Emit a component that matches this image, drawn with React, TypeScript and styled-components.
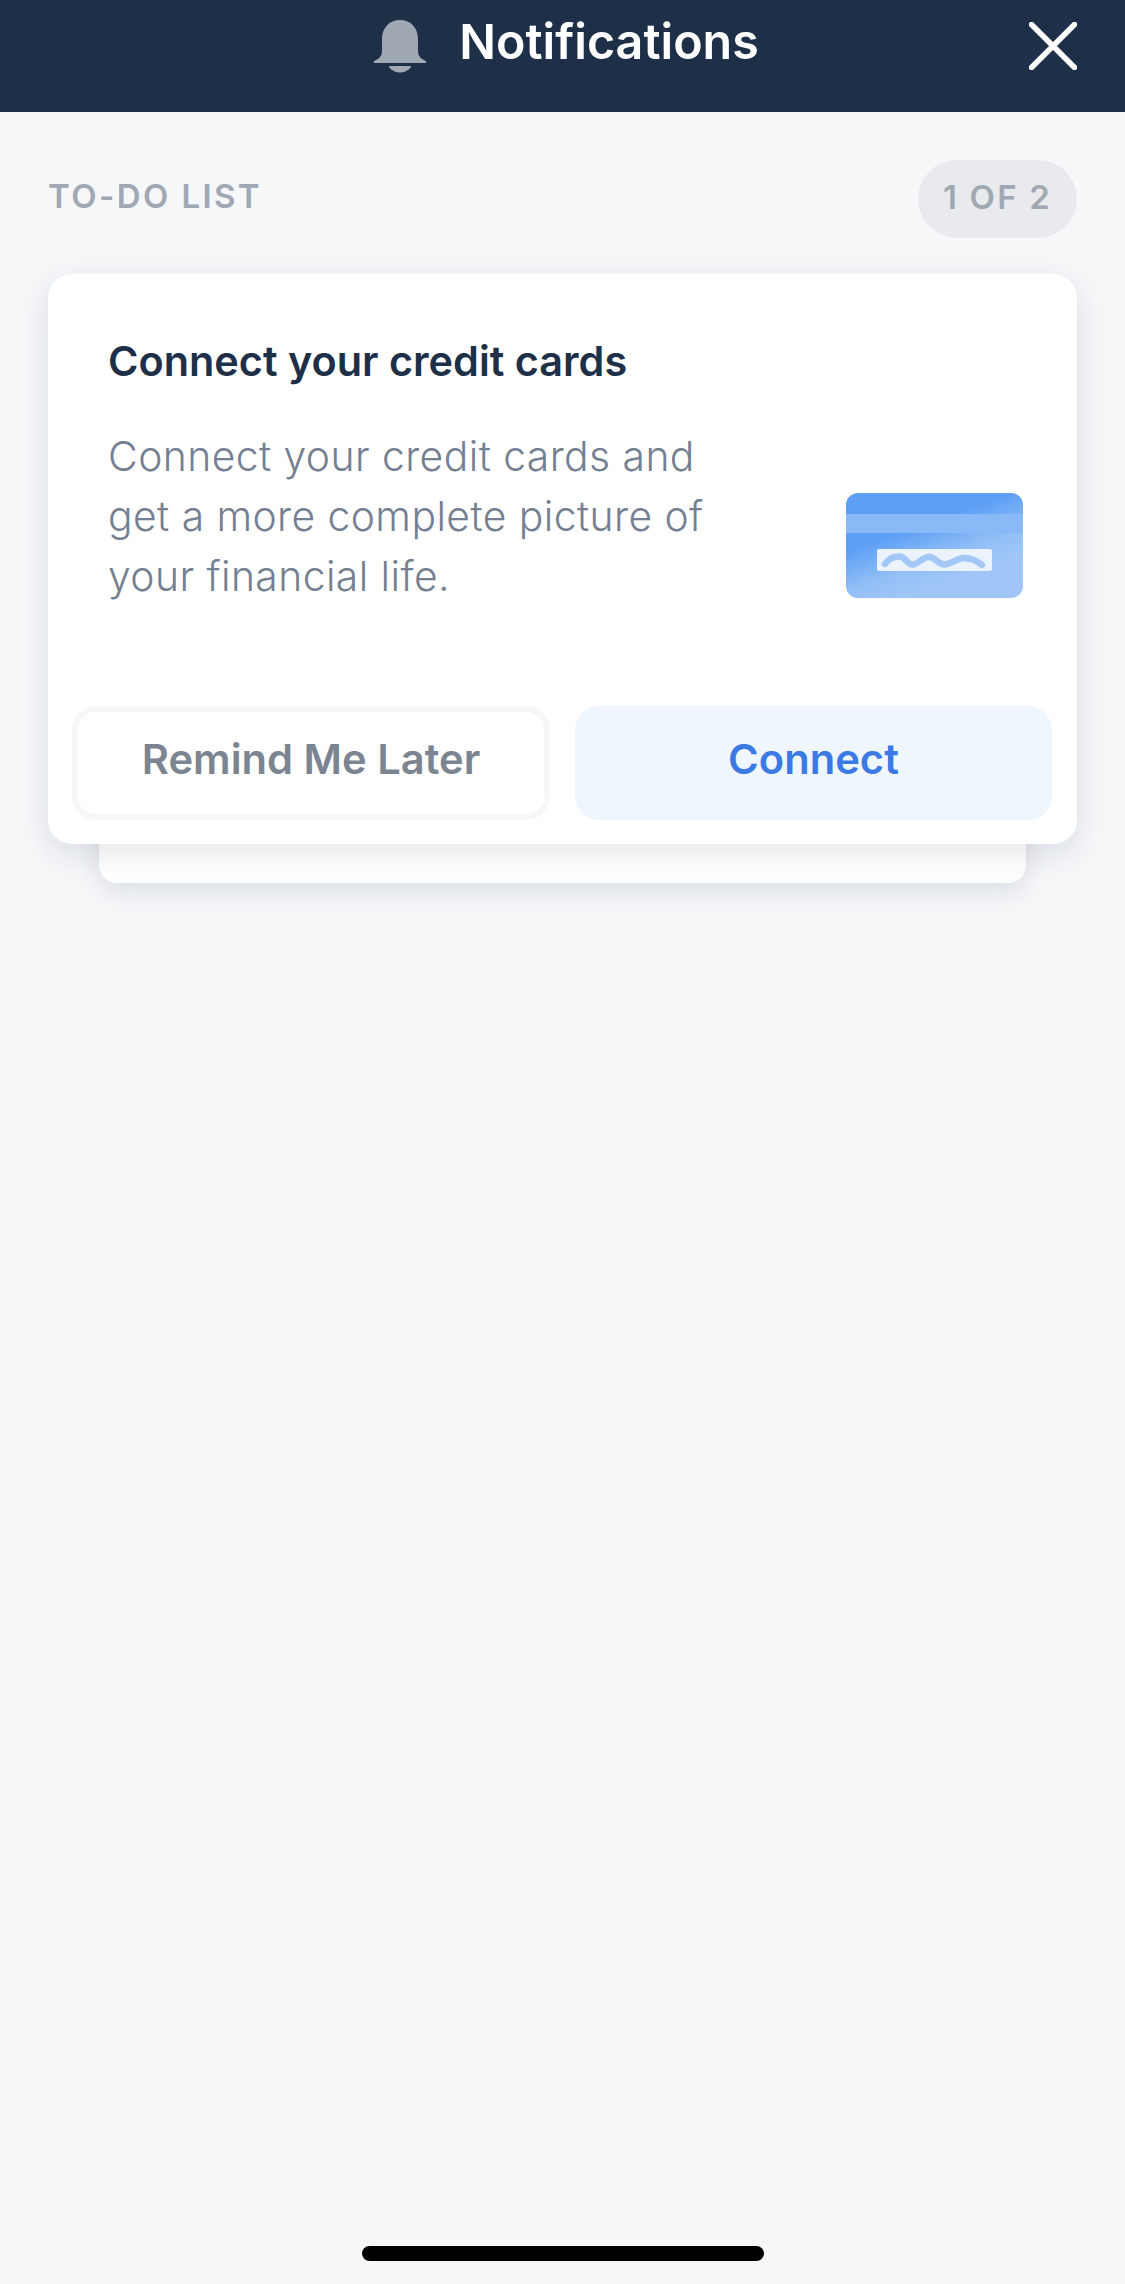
import React from 'react';
import styled, { createGlobalStyle } from 'styled-components';

const GlobalStyle = createGlobalStyle`
    html, body {
        margin: 0;
        padding: 0;
        background: #f5f7f9;
    }
    * {
        box-sizing: border-box;
    }
`;

const Page = styled.div`
    width: 1125px;
    height: 2284px;
    display: flex;
    flex-direction: column;
    background: #f5f7f9;
    font-family: Inter, 'Liberation Sans', sans-serif;
    overflow: hidden;
`;

const Header = styled.header`
    position: relative;
    height: 112px;
    flex-shrink: 0;
    display: flex;
    justify-content: center;
    background: #1e2f48;
    padding: 16px 0 0 7px;
`;

const TitleGroup = styled.div`
    display: flex;
    align-items: flex-start;
    gap: 32px;
    height: 52px;
`;

const HeaderTitle = styled.h1`
    margin: 0;
    font-size: 48.4px;
    line-height: 52px;
    font-weight: 600;
    color: #fff;
`;

const CloseButton = styled.button`
    position: absolute;
    top: 22px;
    right: 48px;
    width: 48px;
    height: 48px;
    padding: 0;
    border: 0;
    background: none;
`;

const Content = styled.main`
    flex: 1;
    padding: 48px 48px 0;
`;

const ListHead = styled.div`
    display: flex;
    justify-content: space-between;
    align-items: center;
    height: 78px;
    margin-bottom: 36px;
`;

const ListLabel = styled.span`
    font-size: 33px;
    font-weight: 600;
    letter-spacing: 2.4px;
    color: #a0a8b4;
    margin-bottom: 6px;
`;

const CountPill = styled.span`
    width: 159px;
    height: 78px;
    display: flex;
    align-items: center;
    justify-content: center;
    border-radius: 39px;
    background: #e8eaed;
    font-size: 33px;
    font-weight: 600;
    letter-spacing: 2.2px;
    color: #a0a8b4;
    padding-bottom: 4px;
`;

const Stack = styled.div`
    position: relative;
`;

const BackCard = styled.div`
    position: absolute;
    left: 51px;
    right: 51px;
    bottom: -39px;
    height: 80px;
    border-radius: 0 0 18px 18px;
    background: #fff;
    box-shadow: 0 8px 24px rgba(30, 47, 72, 0.12);
`;

const Card = styled.section`
    position: relative;
    height: 570px;
    border-radius: 24px;
    background: #fff;
    box-shadow: 0 10px 30px rgba(30, 47, 72, 0.12);
    padding: 0 25px 24px 24px;
    display: flex;
    flex-direction: column;
`;

const CardBody = styled.div`
    flex: 1;
    padding: 62px 29px 0 36px;
`;

const CardTitle = styled.h2`
    margin: 0 0 40px;
    font-size: 41.4px;
    line-height: 50px;
    font-weight: 600;
    color: #1e2f48;
`;

const CardRow = styled.div`
    display: flex;
    justify-content: space-between;
    align-items: flex-end;
`;

const CardText = styled.p`
    margin: 0;
    width: 630px;
    font-size: 40.8px;
    line-height: 60px;
    font-weight: 300;
    letter-spacing: 0.44px;
    color: #748091;
`;

const CardArt = styled.svg`
    flex-shrink: 0;
    margin-bottom: 8px;
`;

const Actions = styled.div`
    display: grid;
    grid-template-columns: 478px 1fr;
    gap: 25px;
`;

const ActionButton = styled.button<{ $primary?: boolean }>`
    height: 114px;
    padding: 0 0 8px;
    border-radius: 24px;
    border: ${props => (props.$primary ? '0' : '6px solid #f5f7f9')};
    background: ${props => (props.$primary ? '#f0f6fe' : '#fff')};
    color: ${props => (props.$primary ? '#3b7ae4' : '#7b8592')};
    font-family: inherit;
    font-size: 41.7px;
    font-weight: 600;
`;

const HomeBar = styled.div`
    width: 402px;
    height: 15px;
    margin: 0 auto 23px;
    border-radius: 8px;
    background: #000;
`;

const BellIcon = () => (
    <svg width="54" height="54" viewBox="0 0 54 54" style={{ marginTop: 3 }}>
        <path
            d="M27 1C16 1 9 9 9 20V32C9 37 6 40 2 41.500C0 42.500 0.500 44 2 44H52C53.500 44 54 42.500 52 41.500C48 40 45 37 45 32V20C45 9 38 1 27 1Z"
            fill="#a0a8b4"
        />
        <path
            d="M17 47C16 47 15.500 48 16.500 49C19 51.500 23 53.500 27 53.500C31 53.500 35 51.500 37.500 49C38.500 48 38 47 37 47Z"
            fill="#a0a8b4"
        />
    </svg>
);

const CloseIcon = () => (
    <svg width="48" height="48" viewBox="0 0 48 48">
        <path d="M2.500 2.500L45.500 45.500M45.500 2.500L2.500 45.500" stroke="#fff" strokeWidth="5.500" strokeLinecap="round" />
    </svg>
);

const CreditCardArt = () => (
    <CardArt width="177" height="105" viewBox="0 0 177 105">
        <defs>
            <linearGradient id="cardFill" x1="0.3" y1="0.38" x2="0.58" y2="0.85">
                <stop offset="0" stopColor="#5c9ff5" />
                <stop offset="0.6" stopColor="#93bff6" />
                <stop offset="1" stopColor="#a0c6f7" />
            </linearGradient>
        </defs>
        <rect width="177" height="105" rx="12" fill="url(#cardFill)" />
        <rect y="21" width="177" height="19" fill="#8ab9f8" />
        <rect x="31" y="56" width="115" height="22" rx="2" fill="#eaf3fe" />
        <path
            d="M39 71C43 65 49 63 55 63.500C60 65 61 71 66 71.500C72 72 76 64 83 64C89 64 92 71 98 71.500C104 72 111 65 118 65C125 65 131 68 136 72"
            fill="none"
            stroke="#a3c8f8"
            strokeWidth="6.500"
            strokeLinecap="round"
        />
    </CardArt>
);

const App = () => {
    return (
        <Page>
            <GlobalStyle />
            <Header>
                <TitleGroup>
                    <BellIcon />
                    <HeaderTitle>Notifications</HeaderTitle>
                </TitleGroup>
                <CloseButton aria-label="Close">
                    <CloseIcon />
                </CloseButton>
            </Header>
            <Content>
                <ListHead>
                    <ListLabel>TO-DO LIST</ListLabel>
                    <CountPill>1 OF 2</CountPill>
                </ListHead>
                <Stack>
                    <BackCard />
                    <Card>
                        <CardBody>
                            <CardTitle>Connect your credit cards</CardTitle>
                            <CardRow>
                                <CardText>
                                    Connect your credit cards and get a more complete picture of your financial life.
                                </CardText>
                                <CreditCardArt />
                            </CardRow>
                        </CardBody>
                        <Actions>
                            <ActionButton>Remind Me Later</ActionButton>
                            <ActionButton $primary>Connect</ActionButton>
                        </Actions>
                    </Card>
                </Stack>
            </Content>
            <HomeBar />
        </Page>
    );
};

export default App;
